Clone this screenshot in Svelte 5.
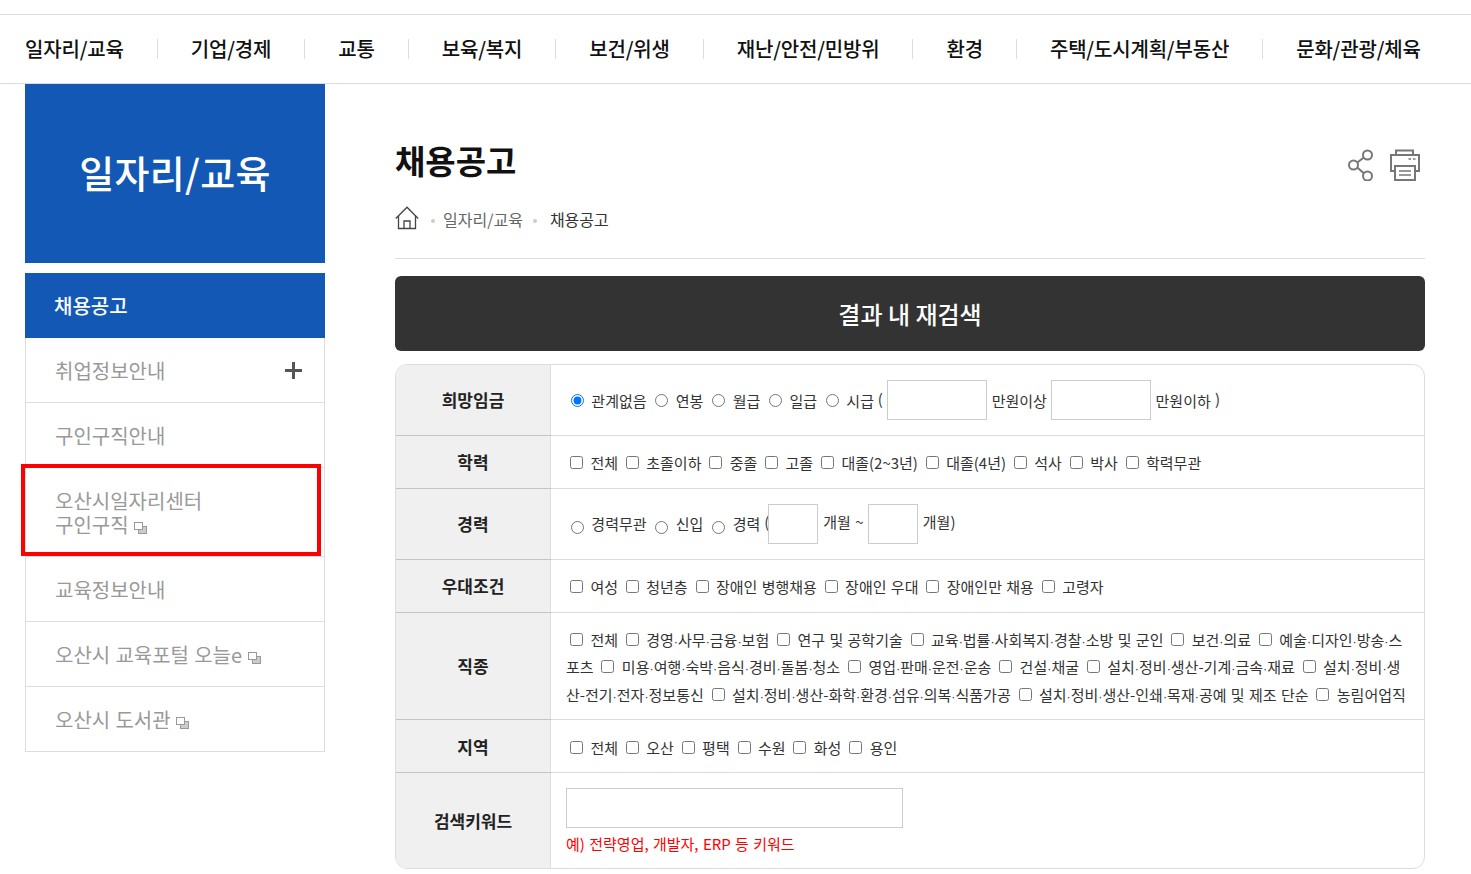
<script>
  const nav = ["일자리/교육", "기업/경제", "교통", "보육/복지", "보건/위생", "재난/안전/민방위", "환경", "주택/도시계획/부동산", "문화/관광/체육"];
  const pay = ["관계없음", "연봉", "월급", "일급", "시급"];
  const edu = ["전체", "초졸이하", "중졸", "고졸", "대졸(2~3년)", "대졸(4년)", "석사", "박사", "학력무관"];
  const career = ["경력무관", "신입", "경력"];
  const pref = ["여성", "청년층", "장애인 병행채용", "장애인 우대", "장애인만 채용", "고령자"];
  const jobs = [
    "전체", "경영·사무·금융·보험", "연구 및 공학기술", "교육·법률·사회복지·경찰·소방 및 군인", "보건·의료",
    "예술·디자인·방송·스포츠", "미용·여행·숙박·음식·경비·돌봄·청소", "영업·판매·운전·운송", "건설·채굴",
    "설치·정비·생산-기계·금속·재료", "설치·정비·생산-전기·전자·정보통신", "설치·정비·생산-화학·환경·섬유·의복·식품가공",
    "설치·정비·생산-인쇄·목재·공예 및 제조 단순", "농림어업직"
  ];
  const area = ["전체", "오산", "평택", "수원", "화성", "용인"];
</script>

{#snippet ext()}
  <svg class="ext" width="13" height="12" viewBox="0 0 13 12">
    <rect x="4.5" y="4.5" width="8" height="7" fill="#ccc" stroke="#999" />
    <rect x="0.5" y="0.5" width="8" height="7" fill="#fff" stroke="#999" />
  </svg>
{/snippet}

{#snippet checks(items)}
  {#each items as item}<label><input type="checkbox" /> {#each item.split("·") as part, i}{#if i}<span class="md">·</span>{/if}{part}{/each}</label>{" "}{/each}
{/snippet}

<header class="gnb">
  {#each nav as item}
    <a class="gnb-item" href="#top">{item}</a>
  {/each}
</header>

<div class="page">
  <aside class="side">
    <div class="side-title">일자리/교육</div>
    <ul class="menu">
      <li class="active">채용공고</li>
      <li class="has-plus">취업정보안내<span class="plus"></span></li>
      <li>구인구직안내</li>
      <li class="marked">오산시일자리센터<br />구인구직 {@render ext()}<span class="redbox"></span></li>
      <li>교육정보안내</li>
      <li>오산시 교육포털 오늘e {@render ext()}</li>
      <li>오산시 도서관 {@render ext()}</li>
    </ul>
  </aside>

  <main class="main">
    <div class="head">
      <div>
        <h1>채용공고</h1>
        <div class="crumb">
          <svg width="24" height="24" viewBox="0 0 24 24" fill="none" stroke="#444" stroke-width="1.3">
            <path d="M0.8 12.5 L12 1.2 L23.2 12.5" />
            <path d="M3.5 10 V22.5 H20.5 V10" />
            <path d="M9 22.5 V15 H15 V22.5" />
          </svg>
          <span class="dot"></span>
          <span class="crumb-link">일자리/교육</span>
          <span class="dot second"></span>
          <span class="crumb-now">채용공고</span>
        </div>
      </div>
      <div class="tools">
        <svg width="26" height="32" viewBox="0 0 26 32" fill="none" stroke="#777" stroke-width="2">
          <circle cx="19.5" cy="6" r="4.5" />
          <circle cx="5.5" cy="16" r="4.5" />
          <circle cx="19.5" cy="27" r="4.5" />
          <path d="M9.3 13.5 L15.8 8.5 M9.3 18.5 L15.8 24.3" />
        </svg>
        <svg width="32" height="32" viewBox="0 0 32 32" fill="none" stroke="#777" stroke-width="2">
          <path d="M7 6 V1.5 H24 V6" />
          <path d="M6 22 H2 V6 H30 V22 H26" />
          <rect x="6" y="17" width="20" height="14" fill="#fff" />
          <path d="M10 22 H22 M10 26 H22" stroke-width="1.5" />
          <path d="M19.5 10 H22 M24 10 H26.5" stroke-width="1.5" />
        </svg>
      </div>
    </div>

    <div class="bar">결과 내 재검색</div>

    <div class="box">
      <table>
        <tbody>
          <tr class="r70 pay">
            <th>희망임금</th>
            <td>
              {#each pay as item, i}<label><input type="radio" name="pay" checked={i === 0} /> {item}</label>{" "}{/each}
              <span class="paren">(</span>
              <input class="num" type="text" /> 만원이상 <input class="num" type="text" /> 만원이하 <span class="paren">)</span>
            </td>
          </tr>
          <tr class="r52">
            <th>학력</th>
            <td>{@render checks(edu)}</td>
          </tr>
          <tr class="r70 career">
            <th>경력</th>
            <td>
              {#each career as item}<label><input type="radio" name="career" /> {item}</label>{" "}{/each}
              <span class="paren">(</span><input class="mon" type="text" /> <span class="unit">개월 ~</span> <input class="mon" type="text" /> <span class="unit">개월)</span>
            </td>
          </tr>
          <tr class="r52">
            <th>우대조건</th>
            <td>{@render checks(pref)}</td>
          </tr>
          <tr>
            <th>직종</th>
            <td class="jobs">{@render checks(jobs)}</td>
          </tr>
          <tr class="r52">
            <th>지역</th>
            <td>{@render checks(area)}</td>
          </tr>
          <tr class="last">
            <th>검색키워드</th>
            <td>
              <input class="keyword" type="text" />
              <p class="hint">예) 전략영업, 개발자, ERP 등 키워드</p>
            </td>
          </tr>
        </tbody>
      </table>
    </div>
  </main>
</div>

<style>
  :global(body) {
    margin: 0;
    background: #fff;
    color: #333;
    font-family: "Noto Sans CJK KR", "Noto Sans", sans-serif;
    overflow: hidden;
  }

  .gnb {
    display: flex;
    align-items: center;
    height: 68px;
    margin-top: 14px;
    padding-left: 25px;
    border-top: 1px solid #ddd;
    border-bottom: 1px solid #ddd;
  }

  .gnb-item {
    position: relative;
    padding-right: 33px;
    margin-right: 33px;
    color: #111;
    font-size: 20px;
    font-weight: 500;
    letter-spacing: -0.18px;
    line-height: 20px;
    text-decoration: none;
    border-right: 1px solid #ddd;
    white-space: nowrap;
  }

  .gnb-item:last-child {
    border-right: 0;
    padding-right: 0;
    margin-right: 0;
  }

  .page {
    display: flex;
    gap: 70px;
    padding: 0 46px 0 25px;
  }

  .side {
    width: 300px;
    flex: none;
  }

  .side-title {
    display: flex;
    align-items: center;
    justify-content: center;
    box-sizing: border-box;
    height: 179px;
    padding-bottom: 4px;
    background: #1358b5;
    color: #fff;
    font-size: 38px;
    font-weight: 500;
    letter-spacing: 0.3px;
  }

  .menu {
    list-style: none;
    margin: 10px 0 0;
    padding: 0;
  }

  .menu li {
    position: relative;
    padding: 21px 29px 19px 29px;
    border: 1px solid #ddd;
    border-top: 0;
    color: #999;
    font-size: 20px;
    line-height: 24px;
    word-spacing: 0.7px;
  }

  .menu .active {
    padding: 21px 29px 20px;
    border: 0;
    background: #1358b5;
    color: #fff;
    font-weight: 500;
  }

  .plus {
    position: absolute;
    left: 259px;
    top: 24px;
    width: 17px;
    height: 17px;
    background:
      linear-gradient(#555, #555) center / 17px 3px no-repeat,
      linear-gradient(#555, #555) center / 3px 17px no-repeat;
  }

  .redbox {
    position: absolute;
    left: -5px;
    top: -4px;
    width: 292px;
    height: 84px;
    border: 4px solid #f00;
  }

  .ext {
    vertical-align: -1px;
    margin-left: 0.3px;
  }

  .main {
    flex: 1;
    min-width: 0;
  }

  .head {
    display: flex;
    justify-content: space-between;
    height: 175px;
    box-sizing: border-box;
    border-bottom: 1px solid #ddd;
    padding-top: 51px;
  }

  h1 {
    margin: 0;
    color: #111;
    font-size: 33px;
    font-weight: 700;
    line-height: 50px;
  }

  .crumb {
    display: flex;
    align-items: center;
    height: 24px;
    margin-top: 21px;
    font-size: 16px;
  }

  .crumb span {
    line-height: 24px;
    padding-top: 2px;
  }

  .dot {
    width: 4px;
    height: 4px;
    margin: 6px 8px 0 12px;
    padding: 0 !important;
    border-radius: 50%;
    background: #ccc;
  }

  .dot.second {
    margin: 6px 13px 0 10px;
  }

  .crumb-link {
    color: #666;
  }

  .crumb-now {
    color: #333;
  }

  .tools {
    display: flex;
    gap: 15px;
    margin-top: 14px;
    margin-right: 4px;
    align-items: flex-start;
  }

  .bar {
    display: flex;
    align-items: center;
    justify-content: center;
    height: 75px;
    margin-top: 17px;
    border-radius: 6px;
    background: #333;
    color: #fff;
    font-size: 24px;
    font-weight: 500;
  }

  .box {
    margin-top: 13px;
    border: 1px solid #ddd;
    border-radius: 12px;
    overflow: hidden;
  }

  table {
    width: 100%;
    border-collapse: collapse;
  }

  th {
    width: 154px;
    background: #f0f0f0;
    border-right: 1px solid #ddd;
    border-bottom: 1px solid #c4c4c4;
    color: #222;
    font-size: 17px;
    font-weight: 700;
    padding: 0;
  }

  td {
    padding: 0 15px;
    border-bottom: 1px solid #ddd;
    font-size: 15px;
    line-height: 27px;
    word-spacing: 1px;
    color: #333;
  }

  label {
    margin-right: -0.5px;
  }

  input[type="checkbox"],
  input[type="radio"] {
    margin-right: 3px;
  }

  .md {
    font-family: "Liberation Sans", sans-serif;
    font-size: 12.5px;
    line-height: 1;
  }

  .last th,
  .last td {
    border-bottom: 0;
  }

  .r70 {
    height: 71px;
  }

  .pay {
    height: 70px;
  }

  .pay td {
    padding-top: 6px;
  }

  .career td {
    padding-top: 4px;
  }

  .career input[type="radio"] {
    vertical-align: -4px;
  }

  .career .paren {
    margin-right: -1px;
  }

  .career .unit {
    margin-left: 0.6px;
    vertical-align: 2px;
  }

  .r52 {
    height: 53px;
  }

  .r52 td {
    padding-top: 2px;
  }

  .jobs {
    padding-top: 13px;
    padding-bottom: 10.6px;
    line-height: 27.8px;
  }

  input[type="text"] {
    box-sizing: border-box;
    height: 40px;
    margin: 0;
    padding: 0;
    border: 1px solid #ccc;
    background: #fff;
    vertical-align: middle;
  }

  .num {
    width: 100px;
    margin-bottom: 6px !important;
  }

  .mon {
    width: 50px;
    margin-bottom: 4px !important;
  }

  .paren {
    vertical-align: 2px;
  }

  .last td {
    padding-top: 15px;
    padding-bottom: 11px;
  }

  .keyword {
    display: block;
    width: 337px;
  }

  .hint {
    margin: 2px 0 0;
    color: #f00;
    font-size: 15px;
  }
</style>
